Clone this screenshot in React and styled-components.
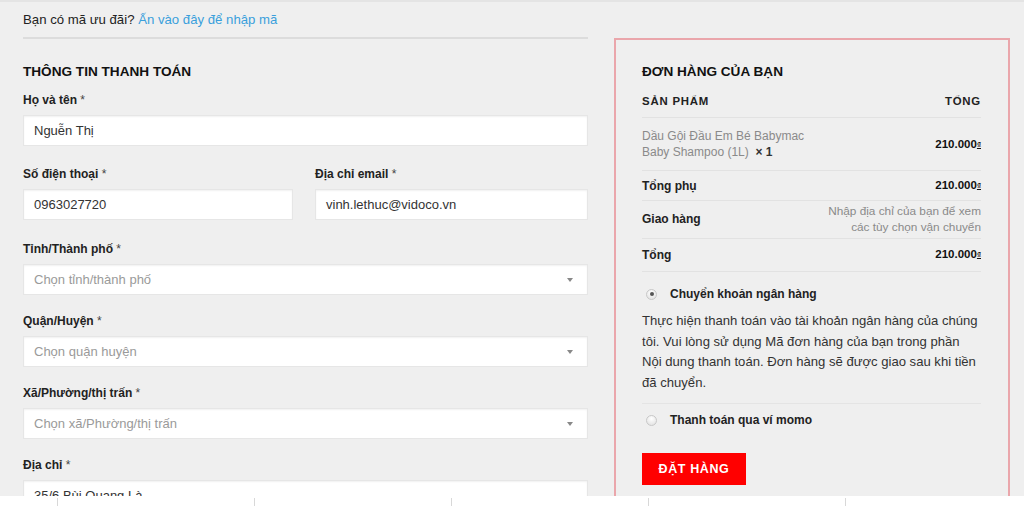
import React from "react";
import styled, { createGlobalStyle } from "styled-components";

const Global = createGlobalStyle`
  html, body { margin: 0; padding: 0; }
  body {
    background: #efefef;
    font-family: "Liberation Sans", Arial, sans-serif;
    color: #222;
    width: 1024px;
    height: 506px;
    overflow: hidden;
  }
  #root { height: 100%; }
`;

const Page = styled.div`
  height: 506px;
  display: flex;
  flex-direction: column;
  border-top: 2px solid #e4e4e4;
  box-sizing: border-box;
`;

const Main = styled.div`
  flex: 1;
  overflow: hidden;
  display: grid;
  grid-template-columns: 565px 396px;
  column-gap: 26px;
  padding: 0 23px;
  align-items: start;
`;

const LeftCol = styled.div`
  display: flex;
  flex-direction: column;
`;

const Coupon = styled.div`
  font-size: 13.2px;
  line-height: 20px;
  padding: 8px 0 7px;
  border-bottom: 2px solid #dcdcdc;
  color: #222;
  a { color: #3a9fdc; text-decoration: none; }
`;

const Heading = styled.h3`
  margin: 0;
  font-size: 13.6px;
  line-height: 20px;
  font-weight: 700;
  color: #111;
  text-transform: uppercase;
`;

const BillingHeading = styled(Heading)`
  margin-top: 23px;
  margin-bottom: 9px;
`;

const FieldRow = styled.div`
  display: grid;
  grid-template-columns: ${(p) => (p.$split ? "270px 273px" : "1fr")};
  column-gap: 22px;
`;

const Field = styled.div`
  display: flex;
  flex-direction: column;
  margin-bottom: ${(p) => p.$mb || 17}px;
`;

const Label = styled.label`
  font-size: 12px;
  line-height: 18px;
  font-weight: 700;
  color: #222;
  margin-bottom: 6px;
  span { font-weight: 400; color: #444; }
`;

const Box = styled.div`
  height: 31px;
  box-sizing: border-box;
  background: #fff;
  border: 1px solid #e6e6e6;
  box-shadow: inset 0 1px 2px rgba(0, 0, 0, 0.06);
  display: flex;
  align-items: center;
  justify-content: space-between;
  padding: 0 10px;
  font-size: 13px;
  color: ${(p) => (p.$placeholder ? "#9a9a9a" : "#333")};
`;

const Caret = styled.span`
  width: 0;
  height: 0;
  border-left: 3.5px solid transparent;
  border-right: 3.5px solid transparent;
  border-top: 4px solid #888;
  margin-right: 4px;
`;

const Panel = styled.div`
  margin-top: 36px;
  border: 2px solid #eaa6ab;
  border-bottom: none;
  padding: 22px 27px 40px 26px;
  min-height: 480px;
  box-sizing: border-box;
`;

const Table = styled.div`
  display: flex;
  flex-direction: column;
`;

const Row = styled.div`
  display: flex;
  justify-content: space-between;
  align-items: center;
  border-bottom: 1px solid #e2e2e2;
  padding: ${(p) => p.$pad || "6px 0"};
  font-size: 12px;
  line-height: 16px;
`;

const HeadCell = styled.span`
  font-size: 11.4px;
  font-weight: 700;
  letter-spacing: 0.8px;
  color: #222;
`;

const ProductName = styled.span`
  color: #8a8a8a;
  b { color: #333; font-weight: 700; }
`;

const RowLabel = styled.span`
  font-weight: 700;
  color: #222;
`;

const Amount = styled.span`
  font-weight: 700;
  font-size: 11.5px;
  color: #111;
  sup {
    font-size: 8px;
    vertical-align: 1px;
    text-decoration: underline;
  }
`;

const Note = styled.span`
  color: #8a8a8a;
  text-align: right;
  font-size: 11.8px;
`;

const Method = styled.div`
  display: flex;
  align-items: center;
  gap: 13px;
  padding-left: 4px;
  font-size: 12px;
  font-weight: 700;
  color: #222;
  margin-top: ${(p) => p.$mt}px;
`;

const Radio = styled.span`
  width: 11px;
  height: 11px;
  border-radius: 50%;
  border: 1px solid #c8c8c8;
  background: radial-gradient(circle at 50% 30%, #fff, #dedede);
  display: flex;
  align-items: center;
  justify-content: center;
  box-sizing: border-box;
  flex: none;
  &::after {
    content: "";
    width: 4px;
    height: 4px;
    border-radius: 50%;
    background: ${(p) => (p.$checked ? "#555" : "transparent")};
  }
`;

const Desc = styled.p`
  margin: 10px 0 0;
  font-size: 13.1px;
  line-height: 20.6px;
  color: #333;
  white-space: nowrap;
  padding-bottom: 10px;
  border-bottom: 1px solid #e4e4e4;
`;

const Button = styled.button`
  margin-top: 26px;
  background: #ff0000;
  color: #fff;
  border: none;
  font-family: inherit;
  font-size: 12.5px;
  font-weight: 700;
  letter-spacing: 0.6px;
  width: 104px;
  height: 32px;
  padding: 0;
  cursor: pointer;
`;

const Strip = styled.div`
  height: 10px;
  background: #fff;
  display: grid;
  grid-template-columns: 57px repeat(5, 197px);
  padding-top: 2px;
  box-sizing: border-box;
`;

const StripCell = styled.div`
  border-left: ${(p) => (p.$first ? "none" : "1px solid #d8d8d8")};
`;

const Price = () => (
  <Amount>
    210.000<sup>₫</sup>
  </Amount>
);

const InputField = ({ label, value, placeholder, select, mb }) => (
  <Field $mb={mb}>
    <Label>
      {label} <span>*</span>
    </Label>
    <Box $placeholder={!!placeholder}>
      <span>{value || placeholder}</span>
      {select && <Caret />}
    </Box>
  </Field>
);

export default function App() {
  return (
    <>
      <Global />
      <Page>
        <Main>
          <LeftCol>
            <Coupon>
              Bạn có mã ưu đãi? <a href="#">Ấn vào đây để nhập mã</a>
            </Coupon>
            <BillingHeading>Thông tin thanh toán</BillingHeading>
            <InputField label="Họ và tên" value="Nguễn Thị" mb={19} />
            <FieldRow $split>
              <InputField label="Số điện thoại" value="0963027720" mb={20} />
              <InputField label="Địa chỉ email" value="vinh.lethuc@vidoco.vn" mb={20} />
            </FieldRow>
            <InputField label="Tỉnh/Thành phố" placeholder="Chọn tỉnh/thành phố" select />
            <InputField label="Quận/Huyện" placeholder="Chọn quận huyện" select />
            <InputField label="Xã/Phường/thị trấn" placeholder="Chọn xã/Phường/thị trấn" select />
            <InputField label="Địa chỉ" value="35/6 Bùi Quang Là" />
          </LeftCol>
          <Panel>
            <Heading>Đơn hàng của bạn</Heading>
            <Table>
              <Row $pad="11px 0 8px">
                <HeadCell>SẢN PHẨM</HeadCell>
                <HeadCell>TỔNG</HeadCell>
              </Row>
              <Row $pad="10px 0 10px">
                <ProductName>
                  Dầu Gội Đầu Em Bé Babymac
                  <br />
                  Baby Shampoo (1L)&nbsp; <b>× 1</b>
                </ProductName>
                <Price />
              </Row>
              <Row>
                <RowLabel>Tổng phụ</RowLabel>
                <Price />
              </Row>
              <Row $pad="2px 0 3px">
                <RowLabel>Giao hàng</RowLabel>
                <Note>
                  Nhập địa chỉ của bạn để xem
                  <br />
                  các tùy chọn vận chuyển
                </Note>
              </Row>
              <Row $pad="7px 0 8px">
                <RowLabel>Tổng</RowLabel>
                <Price />
              </Row>
            </Table>
            <Method $mt={15}>
              <Radio $checked />
              Chuyển khoản ngân hàng
            </Method>
            <Desc>
              Thực hiện thanh toán vào tài khoản ngân hàng của chúng
              <br />
              tôi. Vui lòng sử dụng Mã đơn hàng của bạn trong phần
              <br />
              Nội dung thanh toán. Đơn hàng sẽ được giao sau khi tiền
              <br />
              đã chuyển.
            </Desc>
            <Method $mt={9}>
              <Radio />
              Thanh toán qua ví momo
            </Method>
            <Button>ĐẶT HÀNG</Button>
          </Panel>
        </Main>
        <Strip>
          <StripCell $first />
          <StripCell />
          <StripCell />
          <StripCell />
          <StripCell />
          <StripCell />
        </Strip>
      </Page>
    </>
  );
}
